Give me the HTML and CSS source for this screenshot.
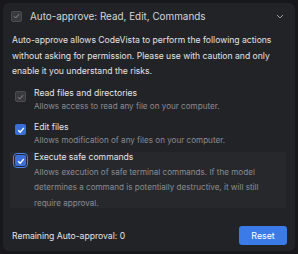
FILE: index.html
```html
<!DOCTYPE html>
<html>
<head>
<meta charset="utf-8">
<link rel="stylesheet" href="styles.css">
</head>
<body>
<div class="card">
  <div class="header">
    <span class="cb cb-disabled"><svg viewBox="0 0 10 10"><path d="M2.2 5.2 L4.2 7.2 L7.8 3" fill="none" stroke="#8d8d8f" stroke-width="1.1"/></svg></span>
    <span class="title">Auto-approve: Read, Edit, Commands</span>
    <svg class="chev" viewBox="0 0 8 5"><path d="M1 1 L4 4 L7 1" fill="none" stroke="#a0a0a2" stroke-width="1"/></svg>
  </div>
  <p class="desc">Auto-approve allows CodeVista to perform the following actions without asking for permission. Please use with caution and only enable it you understand the risks.</p>
  <div class="items">
    <div class="item item-1">
      <span class="cb cb-disabled"><svg viewBox="0 0 10 10"><path d="M2.2 5.2 L4.2 7.2 L7.8 3" fill="none" stroke="#8d8d8f" stroke-width="1.1"/></svg></span>
      <div class="text">
        <div class="name">Read files and directories</div>
        <div class="sub">Allows access to read any file on your computer.</div>
      </div>
    </div>
    <div class="item item-2">
      <span class="cb cb-on"><svg viewBox="0 0 10 10"><path d="M2.2 5.2 L4.2 7.2 L7.8 3" fill="none" stroke="#ffffff" stroke-width="1.3"/></svg></span>
      <div class="text">
        <div class="name">Edit files</div>
        <div class="sub">Allows modification of any files on your computer.</div>
      </div>
    </div>
    <div class="item item-active">
      <span class="cb cb-on cb-focus"><svg viewBox="0 0 10 10"><path d="M2.2 5.2 L4.2 7.2 L7.8 3" fill="none" stroke="#ffffff" stroke-width="1.3"/></svg></span>
      <div class="text">
        <div class="name">Execute safe commands</div>
        <div class="sub">Allows execution of safe terminal commands. If the model determines a command is potentially destructive, it will still require approval.</div>
      </div>
    </div>
  </div>
  <div class="footer">
    <span class="remaining">Remaining Auto-approval: 0</span>
    <button class="reset">Reset</button>
  </div>
</div>
</body>
</html>
```
FILE: styles.css
```css
* { box-sizing: border-box; }
html, body { margin: 0; }
body {
  background: #18181a;
  padding: 3px;
  font-family: Inter, "Noto Sans", sans-serif;
  width: 298px;
  height: 254px;
  overflow: hidden;
}
.card {
  background: #222327;
  border-radius: 6px;
  width: 292px;
  height: 248px;
  display: flex;
  flex-direction: column;
}
.header {
  display: flex;
  align-items: center;
  height: 26px;
  padding: 0 8px;
}
.cb {
  width: 11px;
  height: 11px;
  border-radius: 2px;
  flex: none;
  display: flex;
  align-items: center;
  justify-content: center;
}
.cb svg { width: 10px; height: 10px; }
.cb-disabled {
  background: #3a3a3e;
  border: 1px solid #4c4c50;
}
.cb-on {
  background: #3b6fd8;
}
.cb-focus {
  outline: 1.5px solid #4a7ff0;
  outline-offset: 1px;
}
.title {
  margin-left: 8px;
  color: #d6d6d8;
  font-size: 9.9px;
  flex: 1;
}
.chev {
  width: 8px;
  height: 5px;
  margin-right: 3px;
}
.desc {
  margin: 4px 0 0;
  padding: 0 9px;
  color: #e2e2e4;
  font-size: 8.6px;
  line-height: 15.5px;
}
.items {
  display: flex;
  flex-direction: column;
  padding: 0 9px 0 7px;
}
.item {
  display: flex;
  padding: 0 5px;
}
.item-1 { margin-top: 6.5px; }
.item-2 { margin-top: 7px; }
.text { margin-left: 8px; }
.name {
  color: #e4e4e6;
  font-size: 8.6px;
  line-height: 14px;
}
.sub {
  color: #8c8c90;
  font-size: 8.1px;
  line-height: 13px;
}
.item-1 .cb { margin-top: 5px; }
.item-2 .cb { margin-top: 4px; }
.item-active {
  background: #27282c;
  margin-top: 5px;
  height: 56px;
}
.item-active .cb { margin-top: 3px; }
.item-active .name { line-height: 10px; }
.item-active .sub { line-height: 15.7px; margin-top: 2.5px; }
.footer {
  margin-top: auto;
  display: flex;
  align-items: center;
  justify-content: space-between;
  padding: 0 8px 6px 9px;
}
.remaining {
  color: #e4e4e6;
  font-size: 8.6px;
}
.reset {
  background: #3b7be8;
  color: #ffffff;
  border: none;
  border-radius: 3px;
  width: 48px;
  height: 19px;
  font-family: Inter, "Noto Sans", sans-serif;
  font-size: 8.8px;
  padding: 0;
}
```
